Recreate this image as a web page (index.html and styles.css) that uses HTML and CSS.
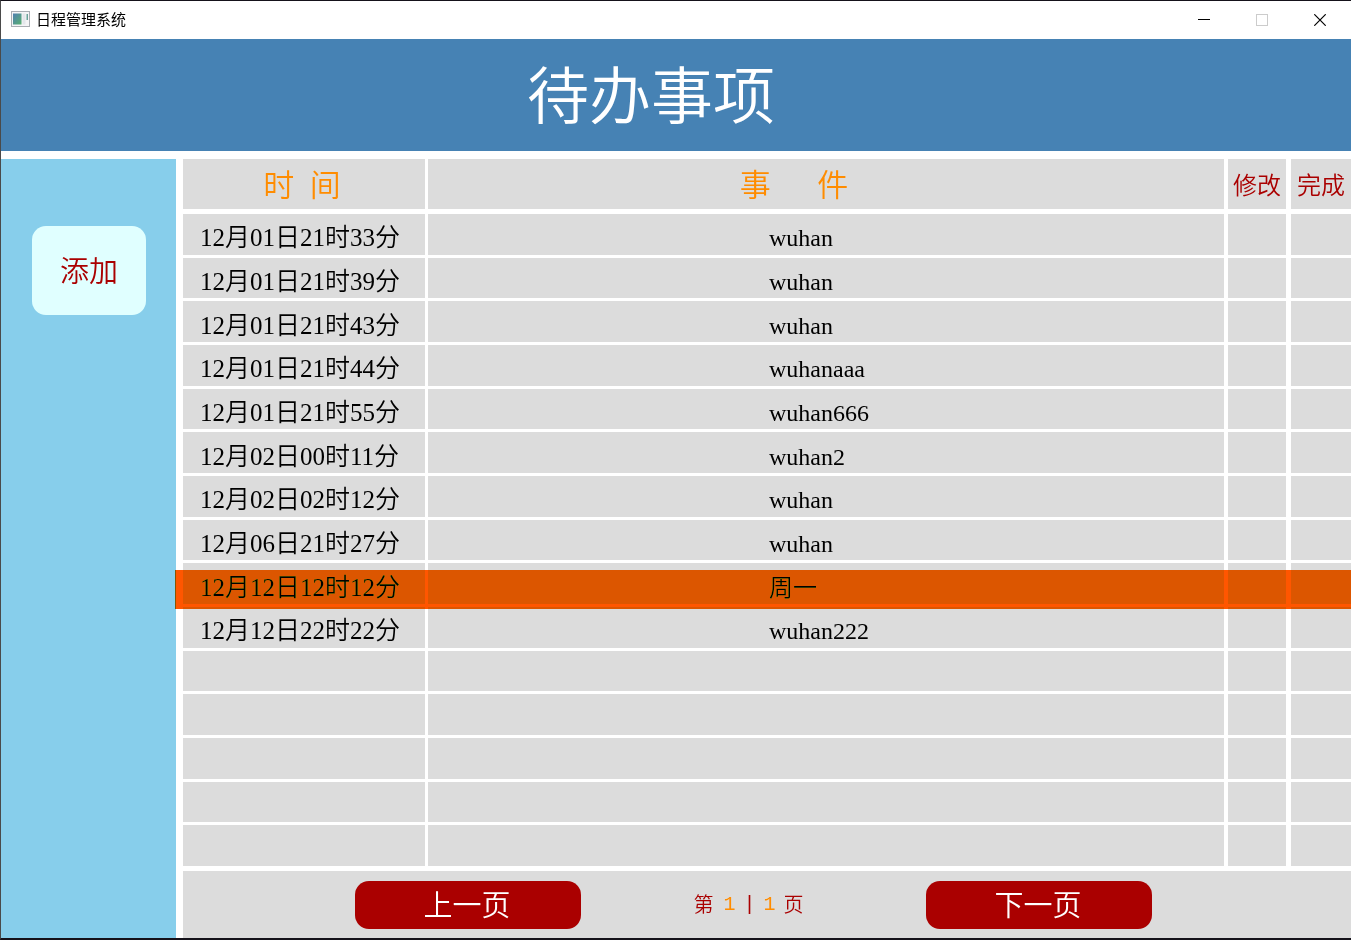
FILE: index.html
```html
<!DOCTYPE html>
<html lang="zh-CN">
<head>
<meta charset="utf-8">
<title>日程管理系统</title>
<link rel="stylesheet" href="styles.css">
</head>
<body>
<div class="window">
  <div class="titlebar">
    <svg class="app-icon" width="19" height="16" viewBox="0 0 19 16" aria-hidden="true">
      <defs>
        <linearGradient id="pane" x1="0" y1="0" x2="1" y2="1">
          <stop offset="0" stop-color="#4f7fb0"/>
          <stop offset="1" stop-color="#58b070"/>
        </linearGradient>
      </defs>
      <rect x="0.5" y="0.5" width="18" height="15" fill="#f4f4f6" stroke="#a9adb3"/>
      <rect x="2" y="2.5" width="8.5" height="11" fill="url(#pane)"/>
      <rect x="11.5" y="2.5" width="3" height="11" fill="#e3e6ea"/>
      <rect x="15.5" y="3" width="1.5" height="6" fill="#6aa39a"/>
    </svg>
    <span class="app-name">日程管理系统</span>
    <button class="control" type="button" aria-label="最小化">
      <svg width="12" height="12" viewBox="0 0 12 12"><path d="M0 5.5H12" stroke="#000"/></svg>
    </button>
    <button class="control" type="button" aria-label="最大化" disabled>
      <svg width="12" height="12" viewBox="0 0 12 12"><rect x="0.5" y="0.5" width="11" height="11" fill="none" stroke="#ccc"/></svg>
    </button>
    <button class="control" type="button" aria-label="关闭">
      <svg width="12" height="12" viewBox="0 0 12 12"><path d="M0.3 0.3L11.7 11.7M11.7 0.3L0.3 11.7" stroke="#000" stroke-width="1.2"/></svg>
    </button>
  </div>
  <header class="banner"><h1>待办事项</h1></header>
  <div class="body">
    <aside class="sidebar"><button class="add" type="button">添加</button></aside>
    <main class="content">
      <div class="list">
        <table>
          <thead>
            <tr><th class="time">时  间</th><th class="event">事      件</th><th class="edit">修改</th><th class="done">完成</th></tr>
          </thead>
          <tbody>
            <tr><td>12月01日21时33分</td><td class="name">wuhan</td><td></td><td></td></tr>
            <tr><td>12月01日21时39分</td><td class="name">wuhan</td><td></td><td></td></tr>
            <tr><td>12月01日21时43分</td><td class="name">wuhan</td><td></td><td></td></tr>
            <tr><td>12月01日21时44分</td><td class="name">wuhanaaa</td><td></td><td></td></tr>
            <tr><td>12月01日21时55分</td><td class="name">wuhan666</td><td></td><td></td></tr>
            <tr><td>12月02日00时11分</td><td class="name">wuhan2</td><td></td><td></td></tr>
            <tr><td>12月02日02时12分</td><td class="name">wuhan</td><td></td><td></td></tr>
            <tr><td>12月06日21时27分</td><td class="name">wuhan</td><td></td><td></td></tr>
            <tr class="selected"><td>12月12日12时12分</td><td class="name">周一</td><td></td><td></td></tr>
            <tr><td>12月12日22时22分</td><td class="name">wuhan222</td><td></td><td></td></tr>
            <tr><td></td><td></td><td></td><td></td></tr>
            <tr><td></td><td></td><td></td><td></td></tr>
            <tr><td></td><td></td><td></td><td></td></tr>
            <tr><td></td><td></td><td></td><td></td></tr>
            <tr><td></td><td></td><td></td><td></td></tr>
          </tbody>
        </table>
      </div>
      <footer class="pager">
        <button class="page-button" type="button">上一页</button>
        <div class="page-info"><span>第</span><span class="num">1</span><span class="bar">|</span><span class="num">1</span><span>页</span></div>
        <button class="page-button" type="button">下一页</button>
      </footer>
    </main>
  </div>
</div>
</body>
</html>
```
FILE: styles.css
```css
* {
  box-sizing: border-box;
}

body {
  margin: 0;
  background: #fff;
  font-family: "Liberation Serif", "Noto Sans CJK SC", serif;
  font-weight: 350;
}

.window {
  display: flex;
  flex-direction: column;
  min-height: 100vh;
  margin-right: 4px;
  border-top: 1px solid #15121a;
  border-bottom: 2px solid #15121a;
  border-left: 1px solid #4a4a4a;
}

.titlebar {
  display: flex;
  align-items: center;
  height: 38px;
  padding: 0 2px 2px 10px;
}

.app-icon {
  margin-right: 6px;
}

.app-name {
  flex: 1;
  font: 400 15px/20px "Noto Sans CJK SC", sans-serif;
  color: #000;
}

.control {
  display: flex;
  align-items: center;
  justify-content: center;
  width: 58px;
  height: 36px;
  padding: 2px 0 0;
  border: 0;
  background: transparent;
}

.banner {
  display: flex;
  align-items: center;
  justify-content: center;
  height: 112px;
  padding: 6px 50px 0 0;
  background: #4682b4;
  color: #fff;
}

.banner h1 {
  margin: 0;
  font-size: 62px;
  font-weight: 350;
  line-height: 80px;
}

.body {
  flex: 1;
  display: flex;
  gap: 7px;
  margin-top: 8px;
}

.sidebar {
  width: 175px;
  padding: 67px 30px 0 31px;
  background: #87ceeb;
}

.add {
  width: 100%;
  height: 89px;
  padding: 0 0 4px;
  border: 0;
  border-radius: 14px;
  background: #e0ffff;
  color: #a00;
  font: inherit;
  font-size: 29px;
}

.content {
  flex: 1;
  display: flex;
  flex-direction: column;
}

.list {
  flex: 1;
  display: grid;
}

table {
  width: 100%;
  height: 100%;
  table-layout: fixed;
  border-spacing: 0;
  color: #000;
}

th,
td {
  padding: 0;
  border: 0 solid #fff;
  border-right-width: 4px;
  background: #dcdcdc;
  font-weight: 350;
  white-space: pre;
}

th:first-child,
td:first-child {
  border-right-width: 3px;
}

th:nth-child(3),
td:nth-child(3) {
  border-right-width: 5px;
}

th:last-child,
td:last-child {
  border-right-width: 0;
}

th {
  height: 55px;
  padding-top: 4px;
  border-bottom-width: 5px;
  color: #a00;
  font-size: 24px;
  line-height: 32px;
}

th.time,
th.event {
  color: #ff8c00;
  font-size: 31px;
}

th.time {
  width: 245px;
  padding-right: 4px;
}

th.event {
  padding-right: 64px;
}

th.edit {
  width: 63px;
}

th.done {
  width: 60px;
}

td {
  padding: 8px 0 0 17px;
  border-bottom-width: 3px;
  font-size: 25px;
  line-height: 30px;
}

td:empty::before {
  content: "\a0";
}

tbody tr:last-child td {
  border-bottom-width: 5px;
}

td.name {
  padding-left: 341px;
  font-size: 24px;
}

.selected {
  position: relative;
}

.selected td:last-child::after {
  content: "";
  position: absolute;
  top: 7px;
  left: -8px;
  right: 0;
  height: 39px;
  background: #ff5600;
  mix-blend-mode: darken;
}

.pager {
  display: flex;
  align-items: center;
  justify-content: space-between;
  height: 67px;
  padding: 0 199px 0 172px;
  background: #dcdcdc;
}

.page-button {
  width: 226px;
  height: 48px;
  padding: 0 2px 4px 0;
  border: 0;
  border-radius: 14px;
  background: #a00;
  color: #fff;
  font: inherit;
  font-size: 29px;
}

.page-info {
  display: flex;
  align-items: center;
  gap: 10px;
  width: 120px;
  color: #a00;
  font-size: 20px;
  line-height: 30px;
}

.num,
.bar {
  width: 10px;
  font-family: "Liberation Mono", monospace;
  text-align: center;
}

.num {
  color: #ff8c00;
}
```
